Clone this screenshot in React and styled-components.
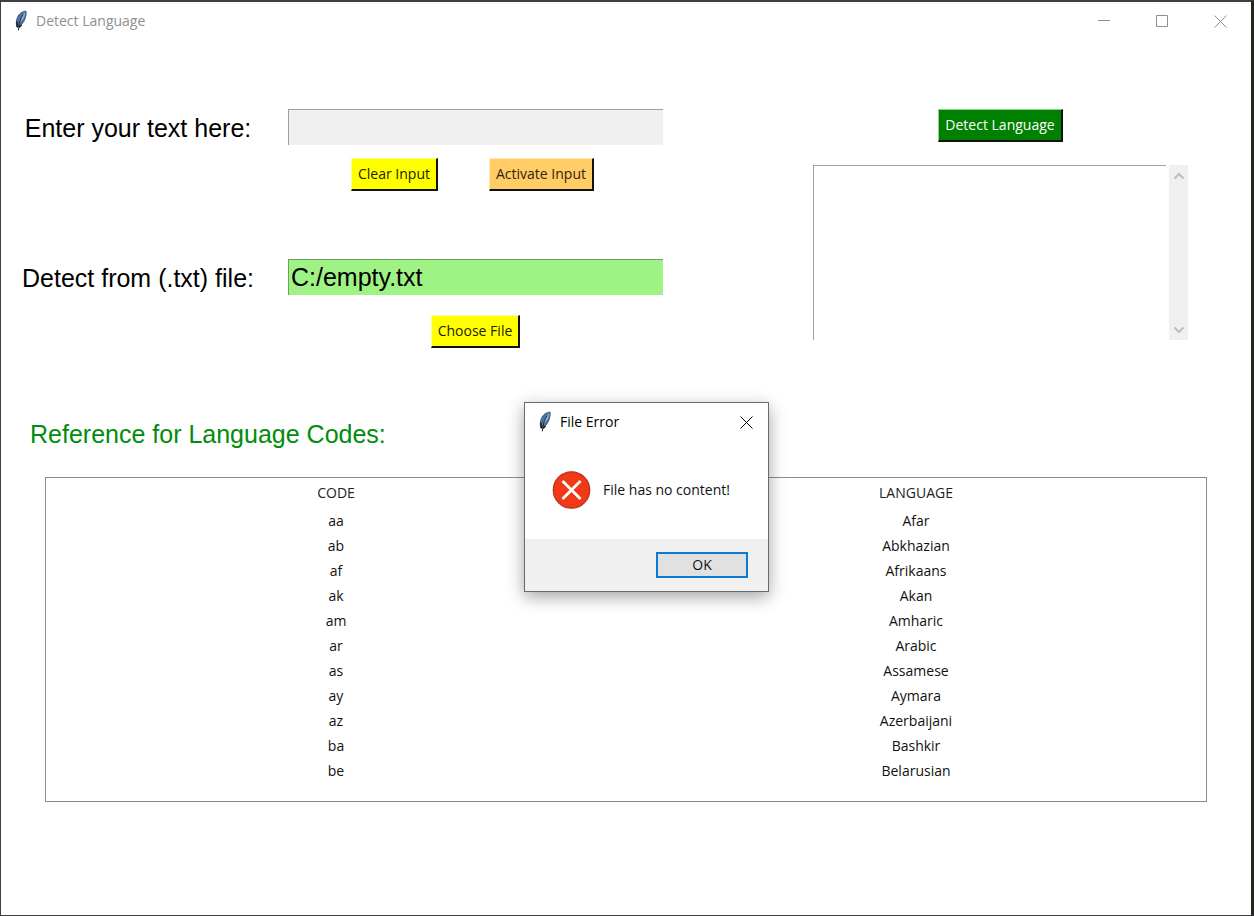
import React from "react";
import styled, { createGlobalStyle } from "styled-components";

const GlobalStyle = createGlobalStyle`
  *, *::before, *::after { box-sizing: border-box; }
  body { margin: 0; background: #fff; }
  button, input, textarea { font-family: inherit; }
`;

const uiFont = `"Open Sans", "Noto Sans", sans-serif`;
const bigFont = `"Liberation Sans", Arial, sans-serif`;

const Window = styled.div`
  position: relative;
  display: flex;
  flex-direction: column;
  min-height: 100vh;
  border: solid #404042;
  border-width: 2px 3px 1px 1px;
  border-right-color: #242622;
  background: #fff;
  color: #111;
  font: 14px/20px ${uiFont};
`;

const TitleBar = styled.header`
  display: flex;
  align-items: center;
  height: 38px;
  padding: 0 2px 0 12px;
  color: #8f8f8f;
`;

const Title = styled.h1`
  flex: 1;
  margin: 0 0 0 7px;
  font-size: 14px;
  font-weight: 400;
  line-height: 20px;
`;

const CaptionButton = styled.button`
  display: grid;
  place-items: center;
  width: ${(p) => (p.$compact ? 43 : 58)}px;
  height: 36px;
  padding: 0;
  border: 0;
  background: transparent;
  color: inherit;
`;

const Body = styled.main`
  display: flex;
  gap: 150px;
  padding: 69px 63px 0 20px;
`;

const InputSide = styled.form`
  display: grid;
  grid-template-columns: 234px minmax(0, 1fr);
  column-gap: 33px;
  align-content: start;
  flex: 642 1 0;
  min-width: 0;
`;

const ResultSide = styled.section`
  display: flex;
  flex-direction: column;
  align-items: center;
  gap: 23px;
  flex: 375 1 0;
  min-width: 0;
`;

const FieldLabel = styled.label`
  align-self: end;
  justify-self: center;
  color: #000;
  font: 25px/34px ${bigFont};
  white-space: nowrap;
`;

const TextField = styled.input`
  width: 100%;
  height: 36px;
  padding: 0 2px;
  border: solid ${(p) => (p.$filled ? "#6f9f61" : "#a0a0a0")};
  border-width: 1px 0 0 1px;
  outline: 0;
  border-radius: 0;
  background: ${(p) => (p.$filled ? "#9ff284" : "#f0f0f0")};
  color: #000;
  && { font: 25px/32px ${bigFont}; }
`;

const ButtonRow = styled.div`
  display: flex;
  grid-column: 2;
  justify-content: center;
  gap: 51px;
  padding: ${(p) => (p.$last ? "20px 0 0" : "13px 6px 68px 0")};
`;

const tones = {
  yellow: ["#ffff00", "#222200", "#ffff90"],
  orange: ["#ffcc66", "#33230a", "#ffe9bd"],
  green: ["#008000", "#ffffff", "#90d090"],
};

const RaisedButton = styled.button`
  height: 33px;
  padding: 0 6px;
  border: solid #111;
  border-width: 1px 2px 2px 1px;
  border-top-color: ${(p) => tones[p.$tone][2]};
  border-left-color: ${(p) => tones[p.$tone][2]};
  background: ${(p) => tones[p.$tone][0]};
  color: ${(p) => tones[p.$tone][1]};
  font-size: 14px;
  line-height: 20px;
  white-space: nowrap;
`;

const ResultBox = styled.div`
  display: flex;
  gap: 3px;
  width: 100%;
  height: 175px;
`;

const ResultText = styled.textarea`
  flex: 1;
  min-width: 0;
  border: solid #a0a0a0;
  border-width: 1px 0 0 1px;
  outline: 0;
  resize: none;
  background: #fff;
`;

const Scrollbar = styled.div`
  display: flex;
  flex-direction: column;
  align-items: center;
  justify-content: space-between;
  width: 19px;
  padding: 7px 0 6px;
  background: #f0f0f0;
`;

const Heading = styled.h2`
  margin: 70px 0 0 29px;
  color: #008c0c;
  font: 25px/32px ${bigFont};
`;

const TableFrame = styled.section`
  height: 325px;
  margin: 27px 44px 0;
  padding: 2px 0 0;
  border: 1px solid #8a8c94;
`;

const Codes = styled.table`
  width: 100%;
  border-collapse: collapse;
  table-layout: fixed;
  text-align: center;
`;

const HeadCell = styled.th`
  height: 28px;
  padding: 0 0 2px;
  font-weight: 400;
  color: #222;
`;

const Cell = styled.td`
  height: 25px;
  padding: 0;
`;

const ErrorDialog = styled.section`
  position: absolute;
  top: 400px;
  left: 523px;
  width: 245px;
  border: 1px solid #6a6a6e;
  background: #fff;
  box-shadow: 0 5px 16px rgba(0, 0, 0, 0.36);
`;

const DialogBar = styled(TitleBar)`
  padding: 0 0 0 12px;
  color: #000;
`;

const Message = styled.div`
  display: flex;
  align-items: center;
  gap: 12px;
  height: 98px;
  padding: 0 27px;
  white-space: nowrap;
`;

const DialogFooter = styled.footer`
  display: flex;
  justify-content: flex-end;
  padding: 13px 20px;
  background: #f0f0f0;
`;

const OkButton = styled.button`
  width: 92px;
  height: 26px;
  padding: 0;
  border: 2px solid #0f78d0;
  background: #e1e1e1;
  color: #111;
  font-size: 14px;
  line-height: 20px;
`;

const Feather = () => (
  <svg width="16" height="22" viewBox="0 0 16 22" aria-hidden="true">
    <path d="M13 1.2C9.4 1.2 6 3.6 4.4 7.4 3.2 10.4 2.8 13.6 4 17.4c3.8-1.6 6.8-4.6 8-8.6.8-2.6 1.6-5.2 1-7.6Z" fill="#4a76a6" stroke="#34465a" strokeWidth=".8" />
    <path d="M12.3 2.2C9 4.6 7.4 8.4 6.4 12.6l3.4-3.2c1.6-2 2.6-4.6 2.5-7.2Z" fill="#8bb0d6" />
    <path d="M10.2 4.5C7.4 8.5 6.2 12 5.4 20.4" fill="none" stroke="#1d2733" strokeWidth="1" />
    <path d="M3.8 11.5 4.4 17M6 17.5l2.6-2.4" fill="none" stroke="#15191e" strokeWidth="1.4" />
  </svg>
);

const Cross = () => (
  <svg width="13" height="13" viewBox="0 0 13 13" fill="none" stroke="currentColor" aria-hidden="true">
    <path d="m.5.5 12 12m0-12-12 12" />
  </svg>
);

const Chevron = ({ down }) => (
  <svg width="12" height="8" viewBox="0 0 12 8" fill="none" stroke="#bcbcbc" strokeWidth="2" aria-hidden="true">
    <path d={down ? "m1.5 1.5 4.5 4.5 4.5-4.5" : "m1.5 6.5 4.5-4.5 4.5 4.5"} />
  </svg>
);

const ErrorIcon = () => (
  <svg width="39" height="39" viewBox="0 0 39 39" aria-hidden="true">
    <circle cx="19.5" cy="19" r="18.2" fill="#f03a17" stroke="#b8351c" strokeWidth="1.3" />
    <path d="m10.5 10 18 18m0-18-18 18" fill="none" stroke="#fff" strokeWidth="2.8" />
  </svg>
);

const languages = [
  ["aa", "Afar"],
  ["ab", "Abkhazian"],
  ["af", "Afrikaans"],
  ["ak", "Akan"],
  ["am", "Amharic"],
  ["ar", "Arabic"],
  ["as", "Assamese"],
  ["ay", "Aymara"],
  ["az", "Azerbaijani"],
  ["ba", "Bashkir"],
  ["be", "Belarusian"],
];

export default function App() {
  return (
    <Window>
      <GlobalStyle />
      <TitleBar>
        <Feather />
        <Title>Detect Language</Title>
        <CaptionButton aria-label="Minimize">
          <svg width="12" height="12" viewBox="0 0 12 12" stroke="currentColor" aria-hidden="true"><path d="M0 5.5h12" /></svg>
        </CaptionButton>
        <CaptionButton aria-label="Maximize">
          <svg width="12" height="12" viewBox="0 0 12 12" fill="none" stroke="currentColor" aria-hidden="true"><path d="M.5.5h11v11H.5z" /></svg>
        </CaptionButton>
        <CaptionButton aria-label="Close"><Cross /></CaptionButton>
      </TitleBar>

      <Body>
        <InputSide onSubmit={(e) => e.preventDefault()}>
          <FieldLabel htmlFor="text">Enter your text here:</FieldLabel>
          <TextField id="text" type="text" disabled />
          <ButtonRow>
            <RaisedButton type="button" $tone="yellow">Clear Input</RaisedButton>
            <RaisedButton type="button" $tone="orange">Activate Input</RaisedButton>
          </ButtonRow>
          <FieldLabel htmlFor="file">Detect from (.txt) file:</FieldLabel>
          <TextField id="file" type="text" $filled readOnly value="C:/empty.txt" />
          <ButtonRow $last>
            <RaisedButton type="button" $tone="yellow">Choose File</RaisedButton>
          </ButtonRow>
        </InputSide>
        <ResultSide>
          <RaisedButton type="button" $tone="green">Detect Language</RaisedButton>
          <ResultBox>
            <ResultText aria-label="Detection result" readOnly />
            <Scrollbar>
              <Chevron />
              <Chevron down />
            </Scrollbar>
          </ResultBox>
        </ResultSide>
      </Body>

      <Heading>Reference for Language Codes:</Heading>
      <TableFrame>
        <Codes>
          <thead>
            <tr>
              <HeadCell scope="col">CODE</HeadCell>
              <HeadCell scope="col">LANGUAGE</HeadCell>
            </tr>
          </thead>
          <tbody>
            {languages.map(([code, name]) => (
              <tr key={code}>
                <Cell>{code}</Cell>
                <Cell>{name}</Cell>
              </tr>
            ))}
          </tbody>
        </Codes>
      </TableFrame>

      <ErrorDialog role="alertdialog" aria-label="File Error">
        <DialogBar>
          <Feather />
          <Title as="h2">File Error</Title>
          <CaptionButton $compact aria-label="Close dialog"><Cross /></CaptionButton>
        </DialogBar>
        <Message>
          <ErrorIcon />
          <span>File has no content!</span>
        </Message>
        <DialogFooter>
          <OkButton type="button">OK</OkButton>
        </DialogFooter>
      </ErrorDialog>
    </Window>
  );
}
